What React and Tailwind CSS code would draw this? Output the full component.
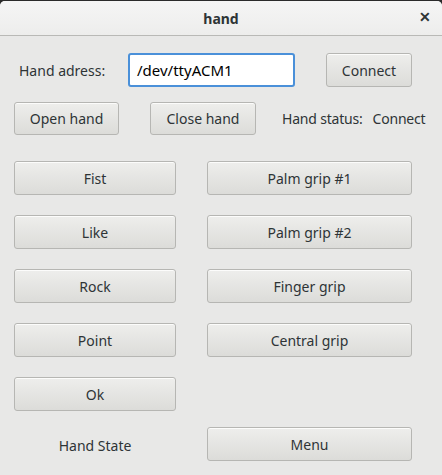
import React from 'react'

const font = { fontFamily: '"Noto Sans", "Open Sans", sans-serif' }

const Btn = ({ children, className = '' }) => (
  <button
    className={`h-[34px] rounded-[3px] border border-[#b6b6b3] bg-gradient-to-b from-[#eeeeec] to-[#dcdcd9] text-[14px] text-[#2e3436] shadow-[inset_0_1px_0_rgba(255,255,255,0.8)] ${className}`}
  >
    {children}
  </button>
)

export default function App() {
  return (
    <div className="w-[442px] h-[475px] bg-[#2b2b2b] pt-px overflow-hidden" style={font}>
      <div className="h-[474px] rounded-t-[5px] bg-[#e8e8e7] flex flex-col overflow-hidden">
        <div className="h-[35px] shrink-0 flex items-center justify-center relative bg-gradient-to-b from-[#f5f5f5] to-[#ededec] border-b border-[#b9b9b6]">
          <span className="text-[14px] font-bold text-[#2e3436]">hand</span>
          <span className="absolute right-[11px] top-[9px] text-[14px] font-bold text-[#2e3436] leading-none">✕</span>
        </div>

        <div className="flex items-center h-[34px] mt-[17px]">
          <span className="ml-[19px] w-[109px] text-[14px] text-[#2e3436]">Hand adress:</span>
          <div className="w-[167px] h-[34px] rounded-[3px] border-2 border-[#4a90d9] bg-white flex items-center pl-[7px] text-[15px] text-black">
            /dev/ttyACM1
          </div>
          <Btn className="ml-[31px] w-[86px]">Connect</Btn>
        </div>

        <div className="flex items-center h-[33px] mt-[15px]">
          <Btn className="ml-[14px] w-[105px] !h-[33px]">Open hand</Btn>
          <Btn className="ml-[31px] w-[106px] !h-[33px]">Close hand</Btn>
          <span className="ml-[26px] text-[14px] tracking-[-0.2px] text-[#2e3436]">Hand status:</span>
          <span className="ml-[10px] text-[14px] tracking-[-0.2px] text-[#2e3436]">Connect</span>
        </div>

        <div className="grid grid-cols-[162px_205px] gap-x-[31px] gap-y-[20px] ml-[14px] mt-[26px]">
          <Btn>Fist</Btn>
          <Btn>Palm grip #1</Btn>
          <Btn>Like</Btn>
          <Btn>Palm grip #2</Btn>
          <Btn>Rock</Btn>
          <Btn>Finger grip</Btn>
          <Btn>Point</Btn>
          <Btn>Central grip</Btn>
          <Btn>Ok</Btn>
          <div />
        </div>

        <div className="grid grid-cols-[162px_205px] gap-x-[31px] ml-[14px] mt-[16px]">
          <div className="flex items-center justify-center text-[14px] text-[#2e3436] pt-[2px]">Hand State</div>
          <Btn>Menu</Btn>
        </div>
      </div>
    </div>
  )
}
